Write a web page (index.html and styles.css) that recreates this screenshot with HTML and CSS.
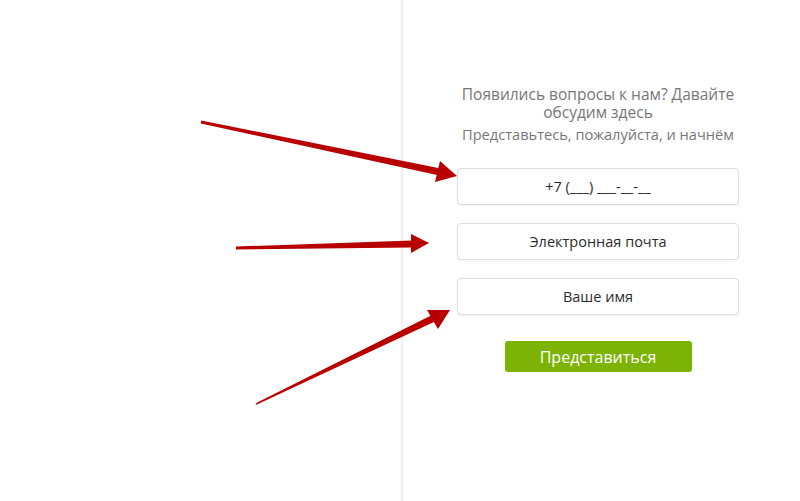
FILE: index.html
```html
<!DOCTYPE html>
<html lang="ru">
<head>
    <meta charset="UTF-8">
    <title>Чат</title>
    <link rel="stylesheet" href="styles.css">
</head>
<body>
    <div class="page">
        <div class="left"></div>
        <div class="right">
            <div class="form">
                <p class="title">Появились вопросы к нам? Давайте обсудим здесь</p>
                <p class="subtitle">Представьтесь, пожалуйста, и начнём</p>
                <input type="text" class="field" placeholder="+7 (___) ___-__-__">
                <input type="text" class="field" placeholder="Электронная почта">
                <input type="text" class="field" placeholder="Ваше имя">
                <button class="submit">Представиться</button>
            </div>
        </div>

        <svg class="arrows" width="800" height="501" viewBox="0 0 800 501">
            <g fill="#b80000">
                <polygon points="200.7,123.5 201.3,120.5 440.7,168.6 439.3,175.4"/>
                <polygon points="457,176 440,161 435,182"/>
                <polygon points="236,249.5 236,246.5 412,240.5 412,247.5"/>
                <polygon points="429,243 411,234 411,253"/>
                <polygon points="255.3,405.3 256.7,402.7 432,315 435,321.5"/>
                <polygon points="450,310 427,310 438,329"/>
            </g>
        </svg>
    </div>
</body>
</html>
```

FILE: styles.css
```css
body {
    margin: 0;
    background-color: #fff;
    font-family: "Open Sans", Arial, sans-serif;
}
.page {
    position: relative;
    display: flex;
    width: 800px;
    height: 501px;
    overflow: hidden;
}
.left {
    width: 401px;
    border-right: 2px solid #efefef;
}
.right {
    flex: 1;
    padding-left: 54px;
}
.form {
    width: 282px;
    padding-top: 85px;
    display: flex;
    flex-direction: column;
    align-items: center;
}
.title {
    margin: 0;
    font-size: 15.5px;
    line-height: 18px;
    color: #777;
    text-align: center;
}
.subtitle {
    margin: 4px 0 25px;
    font-size: 14.6px;
    line-height: 18px;
    color: #777;
    text-align: center;
}
.field {
    box-sizing: border-box;
    width: 282px;
    height: 37px;
    margin-bottom: 18px;
    border: 1px solid #dddddd;
    border-radius: 4px;
    box-shadow: 0 1px 2px rgba(0, 0, 0, 0.05);
    font-family: inherit;
    font-size: 14.5px;
    text-align: center;
}
.field::placeholder {
    color: #2b2b2b;
}
.submit {
    margin-top: 8px;
    width: 187px;
    height: 31px;
    border: none;
    border-radius: 3px;
    background-color: #7cb305;
    color: #fff;
    font-family: inherit;
    font-size: 16px;
    cursor: pointer;
}
.arrows {
    position: absolute;
    left: 0;
    top: 0;
    pointer-events: none;
}
```
